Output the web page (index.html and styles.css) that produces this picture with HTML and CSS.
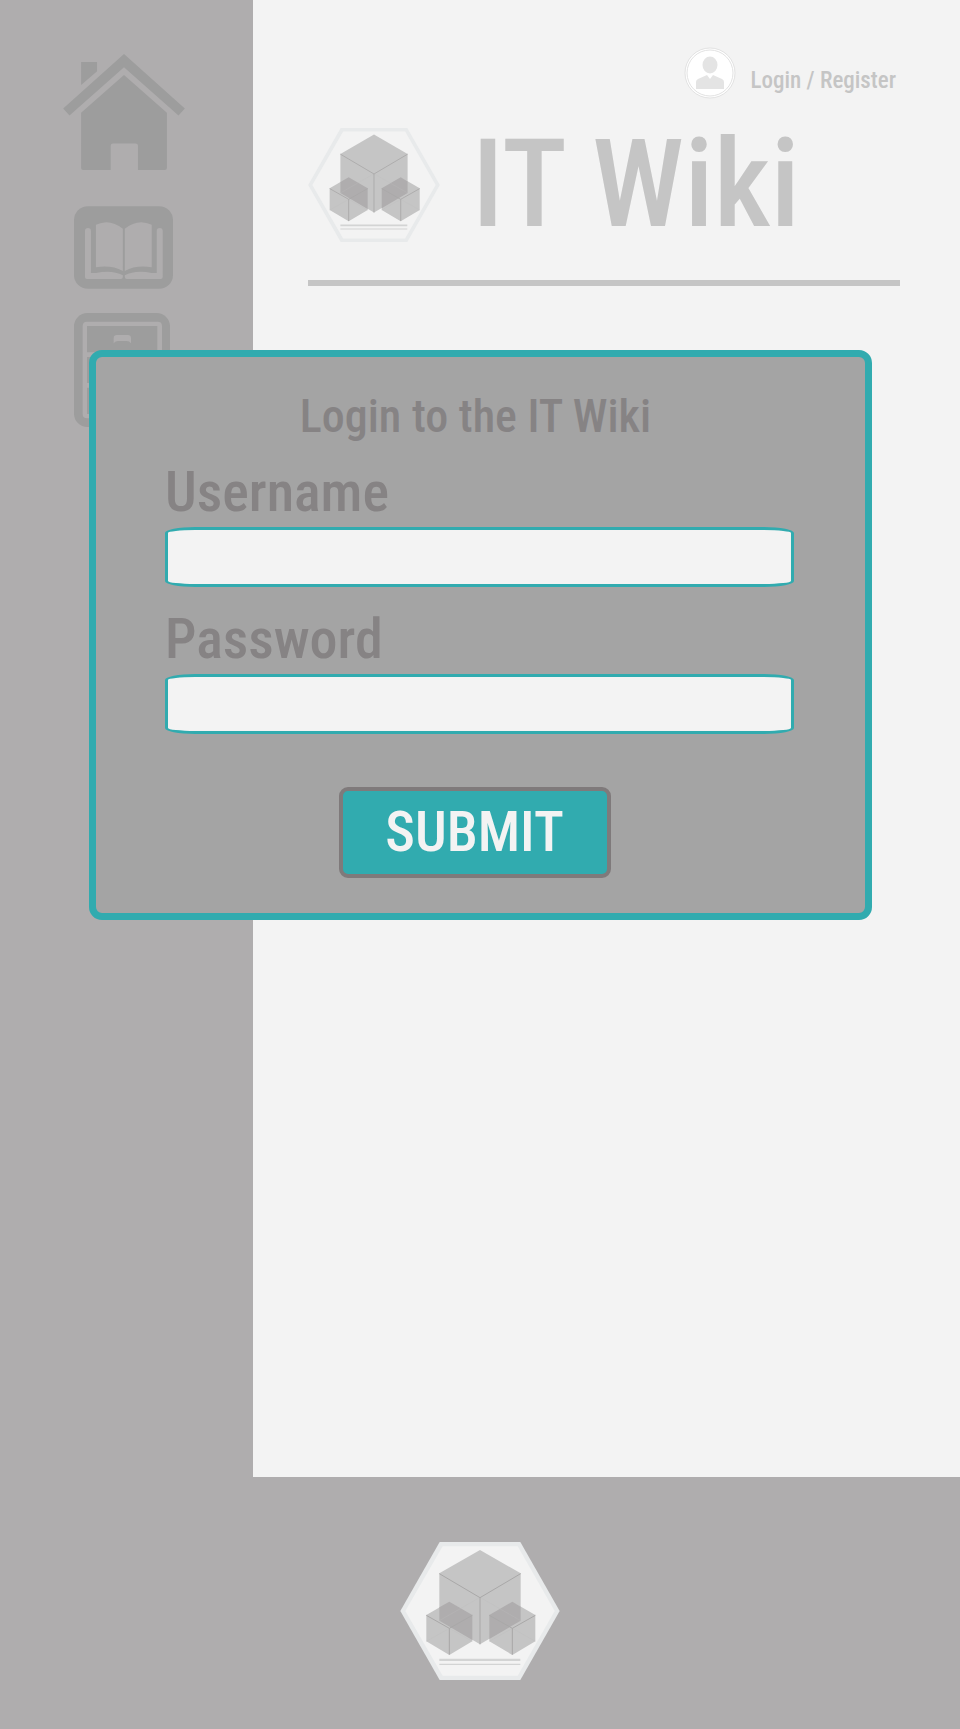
FILE: index.html
```html
<!DOCTYPE html>
<html lang="en">
<head>
<meta charset="utf-8">
<meta name="viewport" content="width=device-width, initial-scale=1">
<title>IT Wiki</title>
<link rel="stylesheet" href="styles.css">
</head>
<body>
<svg class="sprite" aria-hidden="true">
  <symbol id="logo" viewBox="60 66 478 414">
    <path fill="#e8eaeb" d="M60 273 178 66H420L538 273 420 480H178Z"/>
    <path fill="#f3f3f3" d="M75 273 187 79H412L523 273 412 467H187Z"/>
    <path fill="#c5c5c5" d="M299 90 421 160V302L299 373 177 302V160Z"/>
    <path fill="#c5c5c5" d="M207 245 276 285V364L207 405 138 364V285ZM396 245 465 285V364L396 405 327 364V285Z"/>
    <path fill="#afadae" d="M177 262 207 245 276 285V360L177 302ZM421 260 396 245 327 285V357L421 302Z"/>
    <path fill="none" stroke="#bcbbbb" stroke-width="1" d="M177 302 299 232 421 302M138 364 207 325 276 364M327 364 396 325 465 364"/>
    <path fill="none" stroke="#a9a8a8" stroke-width="3" d="M177 161 299 233 421 161M299 233V373M138 286 207 325 276 286M207 325V404M327 286 396 325 465 286M396 325V404"/>
    <path fill="#d3d4d4" d="M177 416H420V423H177ZM177 431H420V435H177Z"/>
  </symbol>
</svg>
<div class="page">
  <nav class="sidebar" aria-label="Main">
    <a class="nav-link" href="#home" aria-label="Home">
      <svg class="icon-home" viewBox="69 71 366 349"><path d="M252 71 435 235 416 256 252 111 88 256 69 235ZM123 95H171V123L123 164ZM252 134 381 248V414Q381 420 375 420H294V347Q294 340 287 340H219Q212 340 212 347V420H129Q123 420 123 414V248Z"/></svg>
    </a>
    <a class="nav-link nav-library" href="#library" aria-label="Library">
      <svg class="icon-book" viewBox="102 528 298 249"><rect x="102" y="528" width="298" height="249" rx="42"/>
      <g class="cut"><path d="M168 584Q210 564 249 596V723Q214 704 168 712ZM336 584Q294 564 255 596V723Q290 704 336 712Z"/>
      <path d="M135 603Q135 594 144 594T153 603V729H168Q218 719 249 736V741Q249 747 243 747H141Q135 747 135 741ZM369 603Q369 594 360 594T351 603V729H336Q286 719 255 736V741Q255 747 261 747H363Q369 747 369 741Z"/></g></svg>
    </a>
    <a class="nav-link nav-archive" href="#archive" aria-label="Archive">
      <svg class="icon-cabinet" viewBox="42 69 288 342"><rect x="42" y="69" width="288" height="342" rx="40"/>
      <path class="cut" fill-rule="evenodd" d="M81 95H293Q306 95 306 108V372Q306 385 293 385H81Q68 385 68 372V108Q68 95 81 95ZM81 108V187H292V108ZM81 201V279H292V201ZM81 293V372H292V293Z"/>
      <path class="cut" d="M161 160V145Q161 135 171 135H203Q213 135 213 145V160Q208 153 200 153H174Q166 153 161 160Z"/></svg>
    </a>
  </nav>
  <main class="content">
    <a class="account" href="#login">
      <svg class="avatar" viewBox="0 0 52 52" aria-hidden="true"><circle cx="26" cy="26" r="25" fill="#fff" stroke="#e2e2e2"/><circle cx="26" cy="26" r="23" fill="#fff" stroke="#e2e2e2"/><ellipse cx="26" cy="18" rx="7.5" ry="8.5" fill="#e4e4e4"/><path fill="#e4e4e4" d="M12 42V35Q12 33 14 32L23 28 26 32 29 28 38 32Q40 33 40 35V42Z"/></svg>
      <span>Login / Register</span>
    </a>
    <header class="brand">
      <svg class="brand-logo" aria-hidden="true"><use href="#logo"/></svg>
      <h1>IT Wiki</h1>
    </header>
  </main>
  <footer class="footer">
    <svg class="footer-logo" role="img" aria-label="IT Wiki logo"><use href="#logo"/></svg>
  </footer>
  <form class="dialog" role="dialog" aria-labelledby="dialog-title">
    <h2 id="dialog-title">Login to the IT Wiki</h2>
    <label for="username">Username</label>
    <input id="username" type="text" autocomplete="username">
    <label for="password">Password</label>
    <input id="password" type="password" autocomplete="current-password">
    <button type="submit">SUBMIT</button>
  </form>
</div>
</body>
</html>
```
FILE: styles.css
```css
* { box-sizing: border-box; }

body {
  margin: 0;
  background: #f3f3f3;
  color: #c5c5c5;
  font-family: "Roboto Condensed", Roboto, "Liberation Sans Narrow", sans-serif;
  font-weight: 500;
}

h1, h2 { margin: 0; font-weight: 500; }
a { color: inherit; text-decoration: none; }
svg { display: block; }
.sprite { position: absolute; width: 0; height: 0; }

.page {
  position: relative;
  display: grid;
  grid-template-columns: 253px 1fr;
  grid-template-rows: 1fr auto;
  min-height: 100vh;
}

.sidebar {
  display: flex;
  flex-direction: column;
  align-items: center;
  padding: 54px 6px 0 0;
  background: #afadae;
}
.nav-link { fill: #9d9d9d; }
.nav-library { padding: 36px 0 24px; }
.nav-archive { padding-right: 4px; }
.cut { fill: #afadae; }
.icon-home { width: 122px; height: 116px; }
.icon-book { width: 99px; height: 83px; }
.icon-cabinet { width: 96px; height: 114px; }

.content { padding: 47px 60px 0 55px; }
.account {
  display: flex;
  justify-content: flex-end;
  align-items: flex-end;
  gap: 15px;
  padding-right: 4px;
  font-size: 23px;
  line-height: 36px;
}
.avatar { width: 52px; height: 52px; }
.brand {
  display: flex;
  align-items: center;
  gap: 32px;
  padding: 29px 0 38px;
  border-bottom: 6px solid #c5c5c5;
}
.brand-logo { width: 132px; height: 114px; flex: none; }
.brand h1 { font-size: 122px; line-height: 114px; white-space: nowrap; }

.footer {
  grid-column: 1 / -1;
  display: flex;
  justify-content: center;
  padding: 65px 0 49px;
  background: #afadae;
}
.footer-logo { width: 160px; height: 138px; }

.dialog {
  position: absolute;
  top: 350px;
  left: 89px;
  right: 88px;
  display: flex;
  flex-direction: column;
  padding: 35px 71px 35px 69px;
  border: 7px solid #31abaf;
  border-radius: 13px;
  background: #a4a4a4;
  color: #868384;
}
.dialog h2 {
  margin-bottom: 12px;
  padding-right: 8px;
  font-size: 46px;
  line-height: 48px;
  text-align: center;
}
.dialog label {
  padding-top: 6px;
  font-size: 56px;
  line-height: 69px;
}
.dialog input {
  width: 100%;
  height: 60px;
  margin-bottom: 12px;
  padding: 0 16px;
  border: 3px solid #31abaf;
  border-radius: 30px / 6px;
  background: #f3f3f3;
  color: #868384;
  font: inherit;
  font-size: 32px;
}
.dialog button {
  align-self: center;
  min-width: 272px;
  margin: 41px 10px 0 0;
  padding: 0 40px;
  border: 4px solid #7f7a7b;
  border-radius: 9px;
  background: #31abaf;
  color: #f3f3f3;
  font: inherit;
  font-size: 56px;
  line-height: 83px;
}
```
